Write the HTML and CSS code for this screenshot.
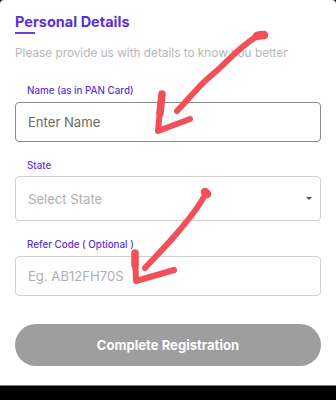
FILE: index.html
```html
<!DOCTYPE html>
<html>
<head>
<meta charset="utf-8">
<link rel="stylesheet" href="styles.css">
</head>
<body>
<div class="screen">
  <div class="page">
    <h1 class="title">Personal Details</h1>
    <div class="underline"></div>
    <p class="subtitle">Please provide us with details to know you better</p>

    <div class="field field-first">
      <label class="label">Name (as in PAN Card)</label>
      <div class="box box-active"><span class="ph ph-dark">Enter Name</span></div>
    </div>

    <div class="field">
      <label class="label">State</label>
      <div class="box box-select"><span class="ph">Select State</span><span class="caret"></span></div>
    </div>

    <div class="field">
      <label class="label">Refer Code ( Optional )</label>
      <div class="box"><span class="ph">Eg. AB12FH70S</span></div>
    </div>

    <button class="btn">Complete Registration</button>
  </div>
  <div class="navbar"></div>

  <svg class="marks" width="336" height="400" viewBox="0 0 336 400">
    <g fill="none" stroke="#f24f58" stroke-linecap="round" stroke-linejoin="round">
      <path d="M257,36 C260,35 263,35 264,35" stroke-width="8.5"/>
      <path d="M257,36 C248,42 236,52 226,62 C216,72 208,78 200,86 L177,111" stroke-width="6"/>
      <path d="M162,94 L160,113" stroke-width="7.5"/>
      <path d="M161,100 L158,131 L190,119" stroke-width="6"/>
      <path d="M205,192 L207,194" stroke-width="8.5"/>
      <path d="M206,193 C200,205 190,218 178,232 C168,244 156,256 145,268" stroke-width="6"/>
      <path d="M135,253 L135,265" stroke-width="7.5"/>
      <path d="M135,256 L136,281 L174,270" stroke-width="6"/>
    </g>
  </svg>
</div>
</body>
</html>
```
FILE: styles.css
```css
* { box-sizing: border-box; }
html, body { margin: 0; padding: 0; background: #000; }
body { font-family: Inter, "Noto Sans", "Liberation Sans", sans-serif; }

.screen {
  position: relative;
  width: 336px;
  height: 400px;
  background: #000;
  overflow: hidden;
}

.page {
  background: #fff;
  height: 386px;
  padding: 10px 15px 0;
  border-radius: 4px 4px 0 0;
  display: flex;
  flex-direction: column;
  border-bottom: 1px solid #7a7a7a;
}

.title {
  margin: 0;
  font-size: 14.5px;
  line-height: 23px;
  font-weight: 700;
  color: #5a2fd8;
}

.underline {
  width: 20px;
  height: 1.5px;
  background: #6a3fe0;
  margin-top: -1px;
}

.subtitle {
  margin: 11.5px 0 0;
  font-size: 11.8px;
  line-height: 16px;
  color: #b7b7b7;
}

.field { display: flex; flex-direction: column; margin-top: 17px; }
.field-first { margin-top: 23px; }

.label {
  font-size: 9.8px;
  line-height: 14px;
  color: #5a35d6;
  padding-left: 12px;
  font-weight: 500;
}

.box {
  margin-top: 3.5px;
  height: 40.5px;
  border: 1px solid #cfcfcf;
  border-radius: 4px;
  display: flex;
  align-items: center;
  padding: 0 12px;
}
.box-active { border-color: #8c8c8c; height: 40px; }
.box-select { height: 45px; justify-content: space-between; padding-right: 8px; }

.ph {
  font-size: 13.1px;
  color: #b0b0b0;
}
.ph-dark { color: #6a6a6a; }

.caret {
  width: 0;
  height: 0;
  border-left: 3.5px solid transparent;
  border-right: 3.5px solid transparent;
  border-top: 3.5px solid #555;
}

.btn {
  margin-top: 28px;
  height: 42px;
  border: 0;
  border-radius: 21px;
  background: #9e9e9e;
  color: #fff;
  font-family: inherit;
  font-size: 13.1px;
  font-weight: 700;
}

.navbar { height: 14px; background: #000; }

.marks {
  position: absolute;
  left: 0;
  top: 0;
  pointer-events: none;
}
```
